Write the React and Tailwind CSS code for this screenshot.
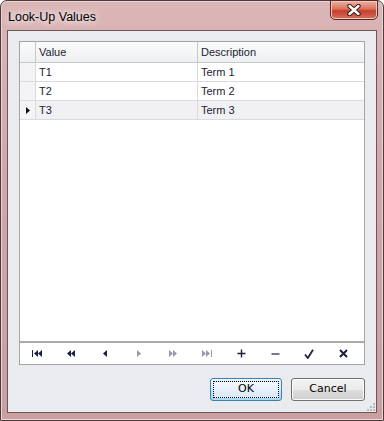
import React from 'react';

const font = { fontFamily: '"Liberation Sans", Arial, sans-serif' };

// 小さな三角形アイコン
function Tri({ dir = 'left', color }) {
  return (
    <svg width="4" height="7" viewBox="0 0 4 7">
      {dir === 'left' ? (
        <polygon points="4,0 0,3.5 4,7" fill={color} />
      ) : (
        <polygon points="0,0 4,3.5 0,7" fill={color} />
      )}
    </svg>
  );
}

function Bar({ color }) {
  return <div className="w-[1.5px] h-[7px]" style={{ background: color }} />;
}

function NavIcon({ kind }) {
  const on = '#1c1f3a';
  const off = '#9a9aa6';
  switch (kind) {
    case 'first':
      return (
        <div className="flex items-center gap-[0.5px]">
          <Bar color={on} />
          <Tri dir="left" color={on} />
          <Tri dir="left" color={on} />
        </div>
      );
    case 'prevPage':
      return (
        <div className="flex items-center">
          <Tri dir="left" color={on} />
          <Tri dir="left" color={on} />
        </div>
      );
    case 'prev':
      return <Tri dir="left" color={on} />;
    case 'next':
      return <Tri dir="right" color={off} />;
    case 'nextPage':
      return (
        <div className="flex items-center">
          <Tri dir="right" color={off} />
          <Tri dir="right" color={off} />
        </div>
      );
    case 'last':
      return (
        <div className="flex items-center gap-[0.5px]">
          <Tri dir="right" color={off} />
          <Tri dir="right" color={off} />
          <Bar color={off} />
        </div>
      );
    case 'add':
      return (
        <svg width="9" height="9" viewBox="0 0 9 9">
          <path d="M4.5 0.5v8M0.5 4.5h8" stroke={on} strokeWidth="1.4" />
        </svg>
      );
    case 'remove':
      return (
        <svg width="9" height="9" viewBox="0 0 9 9">
          <path d="M0.5 5h8" stroke={on} strokeWidth="1.2" />
        </svg>
      );
    case 'ok':
      return (
        <svg width="10" height="10" viewBox="0 0 10 10">
          <path d="M1 5.5 L3.8 9 L9 0.8" stroke={on} strokeWidth="1.8" fill="none" />
        </svg>
      );
    case 'cancel':
      return (
        <svg width="9" height="9" viewBox="0 0 9 9">
          <path d="M1 1L8 8M8 1L1 8" stroke={on} strokeWidth="2" />
        </svg>
      );
    default:
      return null;
  }
}

const rows = [
  { v: 'T1', d: 'Term 1' },
  { v: 'T2', d: 'Term 2' },
  { v: 'T3', d: 'Term 3', current: true },
];

const navs = ['first', 'prevPage', 'prev', 'next', 'nextPage', 'last', 'add', 'remove', 'ok', 'cancel'];

export default function App() {
  return (
    <div className="w-[384px] h-[421px] bg-white" style={font}>
      <div className="w-full h-full flex flex-col rounded-t-[7px] border border-[#4a3a3c] bg-[linear-gradient(180deg,#dbb6b7_0%,#d3a7a9_40%,#c99fa1_100%)] px-[6px] pb-[7px] shadow-[inset_0_0_0_1px_#ecd6d6]">
        {/* タイトルバー */}
        <div className="h-[29px] flex items-start justify-between">
          <div className="pt-[7px] pl-[1px] text-[12.5px] text-black [text-shadow:0_0_6px_#fff,0_0_10px_#fff]">
            Look-Up Values
          </div>
          <div className="mr-[-1px] w-[48px] h-[20px] mt-[-1px] rounded-b-[5px] border border-[#5a2a26] bg-[linear-gradient(180deg,#eab4a8_0%,#d9705c_45%,#c63e2a_55%,#d7725c_100%)] shadow-[inset_0_0_0_1px_#f3c7bd] flex items-center justify-center">
            <svg width="14" height="12" viewBox="0 0 14 12">
              <path d="M2.5 2 L11.5 10 M11.5 2 L2.5 10" stroke="#3a1a1a" strokeWidth="4.4" strokeLinecap="round" />
              <path d="M2.5 2 L11.5 10 M11.5 2 L2.5 10" stroke="#ffffff" strokeWidth="2.4" strokeLinecap="round" />
            </svg>
          </div>
        </div>

        {/* クライアント領域 */}
        <div className="flex-1 border border-[#6e5658] bg-[#eaebef] flex flex-col px-[11px] pt-[10px] pb-[11px] relative">
          {/* グリッド */}
          <div className="h-[324px] border border-[#a2a4a8] bg-white flex flex-col text-[11px] text-[#1b2233]">
            <div className="h-[21px] flex border-b border-[#c5c7cb] bg-[linear-gradient(180deg,#fbfbfc,#eff0f2)]">
              <div className="w-[16px] border-r border-[#c5c7cb]" />
              <div className="w-[162px] border-r border-[#c5c7cb] pl-[3px] flex items-center">Value</div>
              <div className="flex-1 pl-[3px] flex items-center">Description</div>
            </div>
            {rows.map((r) => (
              <div
                key={r.v}
                className={`h-[19px] flex border-b border-[#d9dadd] ${r.current ? 'bg-[#f1f1f3]' : 'bg-white'}`}
              >
                <div className="w-[16px] border-r border-[#d9dadd] bg-[#f4f4f6] flex items-center justify-center">
                  {r.current && (
                    <svg width="4" height="7" viewBox="0 0 4 7">
                      <polygon points="0,0 4,3.5 0,7" fill="#111" />
                    </svg>
                  )}
                </div>
                <div className="w-[162px] border-r border-[#d9dadd] pl-[3px] flex items-center">{r.v}</div>
                <div className="flex-1 pl-[3px] flex items-center">{r.d}</div>
              </div>
            ))}
            <div className="flex-1" />
            {/* ナビゲーター */}
            <div className="h-[23px] border-t-2 border-[#a9abae] flex items-center">
              {navs.map((n) => (
                <div key={n} className="w-[34px] h-full flex items-center justify-center">
                  <NavIcon kind={n} />
                </div>
              ))}
            </div>
          </div>

          {/* ボタン */}
          <div className="mt-[13px] flex justify-end gap-[9px] text-black" style={{ fontFamily: '"DejaVu Sans", sans-serif', fontSize: '11px' }}>
            <button className="w-[72px] h-[23px] rounded-[3px] border border-[#3c7fb1] bg-[linear-gradient(180deg,#eaf6fd_0%,#d9f0fc_50%,#bee6fd_51%,#a7d9f5_100%)] p-[2px]">
              <div className="w-full h-full border border-dotted border-black flex items-center justify-center bg-[linear-gradient(180deg,#f2f7fd,#dce8f8)]">
                OK
              </div>
            </button>
            <button className="w-[74px] h-[23px] rounded-[3px] border border-[#707070] bg-[linear-gradient(180deg,#f2f2f2_0%,#ebebeb_50%,#dddddd_51%,#cfcfcf_100%)] shadow-[inset_0_0_0_1px_#fcfcfc] flex items-center justify-center">
              Cancel
            </button>
          </div>

          {/* サイズ変更グリップ */}
          <div className="absolute right-[1px] bottom-[1px] grid grid-cols-3 gap-[1px]">
            {[0, 0, 1, 0, 1, 1, 1, 1, 1].map((on, i) => (
              <div key={i} className={`w-[2px] h-[2px] ${on ? 'bg-[#b8b9bd]' : ''}`} />
            ))}
          </div>
        </div>
      </div>
    </div>
  );
}
